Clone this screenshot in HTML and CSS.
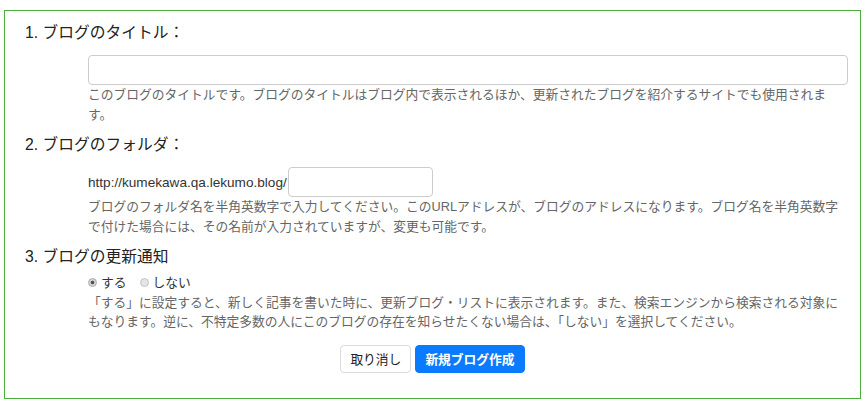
FILE: index.html
```html
<!DOCTYPE html>
<html lang="ja">
<head>
    <meta charset="UTF-8">
    <meta name="viewport" content="width=device-width, initial-scale=1.0">
    <title>ブログの作成</title>
    <link rel="stylesheet" href="styles.css">
</head>
<body>

    <form class="blog-form">
        <div class="field">
            <h3 class="field-title">1. ブログのタイトル：</h3>
            <div class="field-body">
                <input type="text" class="text-input title-input" name="title">
                <p class="hint">このブログのタイトルです。ブログのタイトルはブログ内で表示されるほか、更新されたブログを紹介するサイトでも使用されます。</p>
            </div>
        </div>

        <div class="field">
            <h3 class="field-title">2. ブログのフォルダ：</h3>
            <div class="field-body">
                <div class="url-row">
                    <span class="url-prefix">http://kumekawa.qa.lekumo.blog/</span><input type="text" class="text-input folder-input" name="folder">
                </div>
                <p class="hint">ブログのフォルダ名を半角英数字で入力してください。このURLアドレスが、ブログのアドレスになります。ブログ名を半角英数字で付けた場合には、その名前が入力されていますが、変更も可能です。</p>
            </div>
        </div>

        <div class="field">
            <h3 class="field-title">3. ブログの更新通知</h3>
            <div class="field-body">
                <div class="radio-row">
                    <label class="radio-label"><input type="radio" name="notify" value="1" checked>する</label>
                    <label class="radio-label"><input type="radio" name="notify" value="0">しない</label>
                </div>
                <p class="hint hint-notify">「する」に設定すると、新しく記事を書いた時に、更新ブログ・リストに表示されます。また、検索エンジンから検索される対象にもなります。逆に、不特定多数の人にこのブログの存在を知らせたくない場合は、「しない」を選択してください。</p>
            </div>
        </div>

        <div class="actions">
            <button type="button" class="btn btn-cancel">取り消し</button>
            <button type="submit" class="btn btn-primary">新規ブログ作成</button>
        </div>
    </form>

</body>
</html>
```

FILE: styles.css
```css
body {
    margin: 0;
    font-family: 'Liberation Sans', 'Noto Sans CJK JP', sans-serif;
    background-color: #fff;
    color: #222;
}

.blog-form {
    margin: 10px 4px 9px 4px;
    padding: 11px 12px 25px 12px;
    border: 1px solid #4cae3e;
}

.field-title {
    margin: 0;
    padding-left: 8px;
    font-size: 15.75px;
    font-weight: normal;
    line-height: 22px;
    color: #222;
}

.field + .field .field-title {
    margin-top: 10px;
}

.field-body {
    margin-left: 71px;
}

.text-input {
    box-sizing: border-box;
    height: 30px;
    padding: 4px 8px;
    border: 1px solid #ccc;
    border-radius: 4px;
    font-size: 13px;
    background-color: #fff;
}

.title-input {
    display: block;
    width: 100%;
    margin-top: 11px;
}

.hint {
    margin: 0;
    font-size: 12.75px;
    line-height: 19.5px;
    color: #666;
}

.url-row {
    display: flex;
    align-items: center;
    margin-top: 11px;
}

.url-prefix {
    font-size: 13.6px;
    color: #333;
}

.folder-input {
    width: 145px;
    margin-left: 1px;
}

.radio-row {
    display: flex;
    gap: 13px;
    margin-top: 5px;
    line-height: 19.5px;
    font-size: 12.75px;
    color: #333;
}

.radio-label {
    display: flex;
    align-items: center;
}

.radio-label input {
    appearance: none;
    -webkit-appearance: none;
    box-sizing: border-box;
    width: 9px;
    height: 9px;
    margin: 0 4px 0 0;
    border: 1px solid #c4c4c4;
    border-radius: 50%;
    background-color: #e4e4e4;
}

.radio-label input:checked {
    background: radial-gradient(circle, #555 0, #555 1.6px, #d6d6d6 2.2px);
    border-color: #aaa;
}

.actions {
    margin-top: 13px;
    text-align: center;
    font-size: 0;
}

.btn {
    height: 28px;
    padding: 0 9px;
    margin: 0 2px;
    border-radius: 4px;
    font-family: 'Liberation Sans', 'Noto Sans CJK JP', sans-serif;
    font-size: 12.75px;
    cursor: pointer;
}

.btn-cancel {
    border: 1px solid #dcdcdc;
    background-color: #fff;
    color: #222;
}

.btn-primary {
    border: 1px solid #0a7bff;
    background-color: #0a7bff;
    color: #fff;
    font-weight: bold;
}
```
